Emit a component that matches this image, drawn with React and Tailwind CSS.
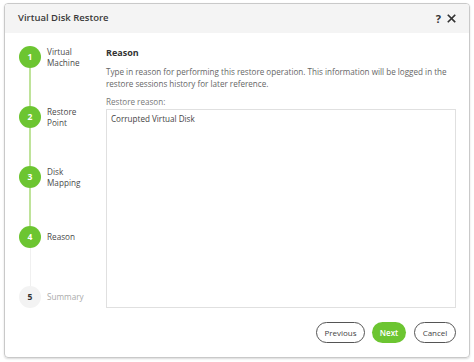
const steps = [
  { n: 1, label: ["Virtual", "Machine"], done: true },
  { n: 2, label: ["Restore", "Point"], done: true },
  { n: 3, label: ["Disk", "Mapping"], done: true },
  { n: 4, label: ["Reason"], done: true },
  { n: 5, label: ["Summary"], done: false },
];

export default function App() {
  return (
    <div className="w-[474px] h-[362px] bg-white pt-[3px] pl-[4px] font-['Open_Sans',sans-serif]">
      <div className="w-[466px] h-[355px] border border-[#c9c9c9] rounded-[4px] shadow-[0_1px_2px_rgba(0,0,0,0.15)] flex flex-col overflow-hidden">
        {/* Header */}
        <div className="h-[29px] bg-[#f4f4f4] flex items-center justify-between pl-[13px] pr-[13px]">
          <span className="text-[9.5px] font-semibold text-[#3a3a3a]">Virtual Disk Restore</span>
          <div className="flex items-center gap-[6px] text-[#333]">
            <span className="text-[11px] font-bold leading-none">?</span>
            <svg width="9" height="9" viewBox="0 0 10 10">
              <path d="M1.5 1.5 L8.5 8.5 M8.5 1.5 L1.5 8.5" stroke="#333" strokeWidth="1.8" strokeLinecap="square" />
            </svg>
          </div>
        </div>

        {/* Body */}
        <div className="flex flex-1">
          {/* Steps */}
          <div className="w-[101px] pl-[14px] pt-[13px] flex flex-col">
            {steps.map((s, i) => (
              <div key={s.n} className="flex">
                <div className="flex flex-col items-center w-[22px]">
                  <div
                    className={
                      s.done
                        ? "w-[22px] h-[22px] rounded-full bg-[#6cc531] text-white flex items-center justify-center text-[8.5px] font-bold"
                        : "w-[22px] h-[22px] rounded-full bg-[#f3f3f3] text-[#333] flex items-center justify-center text-[8.5px] font-bold"
                    }
                  >
                    {s.n}
                  </div>
                  {i < steps.length - 1 && (
                    <div
                      className={
                        steps[i + 1].done
                          ? "w-[2px] h-[38px] bg-[#bfe39a]"
                          : "w-[1px] h-[38px] bg-[#f0f0f0]"
                      }
                    />
                  )}
                </div>
                <div
                  className={
                    s.done
                      ? "ml-[6px] text-[8.2px] leading-[11px] text-[#4a4a4a] " + (s.label.length === 1 ? "mt-[5px]" : "")
                      : "ml-[6px] mt-[5px] text-[8.2px] leading-[11px] text-[#aaa]"
                  }
                >
                  {s.label.map((l) => (
                    <div key={l}>{l}</div>
                  ))}
                </div>
              </div>
            ))}
          </div>

          {/* Content */}
          <div className="flex-1 flex flex-col pr-[13px]">
            <div className="pt-[13px] text-[9px] font-bold text-[#333] leading-[14px]">Reason</div>
            <p className="mt-[6px] text-[8.1px] leading-[12px] text-[#666]">
              Type in reason for performing this restore operation. This information will be logged in the restore sessions history for later reference.
            </p>
            <div className="mt-[6px] text-[8.1px] leading-[12px] text-[#777]">Restore reason:</div>
            <div className="mt-[1px] h-[199px] border border-[#e0e0e0] px-[4px] pt-[3px] text-[8.1px] leading-[12px] text-[#444]">
              Corrupted Virtual Disk
            </div>
            <div className="flex justify-end mt-[14px]">
              <button className="h-[21px] w-[49px] rounded-full border border-[#555] text-[8px] text-[#444] bg-white">Previous</button>
              <button className="ml-[7px] h-[21px] w-[34px] rounded-full bg-[#6cc531] text-[8px] font-semibold text-white">Next</button>
              <button className="ml-[8px] h-[21px] w-[42px] rounded-full border border-[#555] text-[8px] text-[#444] bg-white">Cancel</button>
            </div>
          </div>
        </div>
      </div>
    </div>
  );
}
